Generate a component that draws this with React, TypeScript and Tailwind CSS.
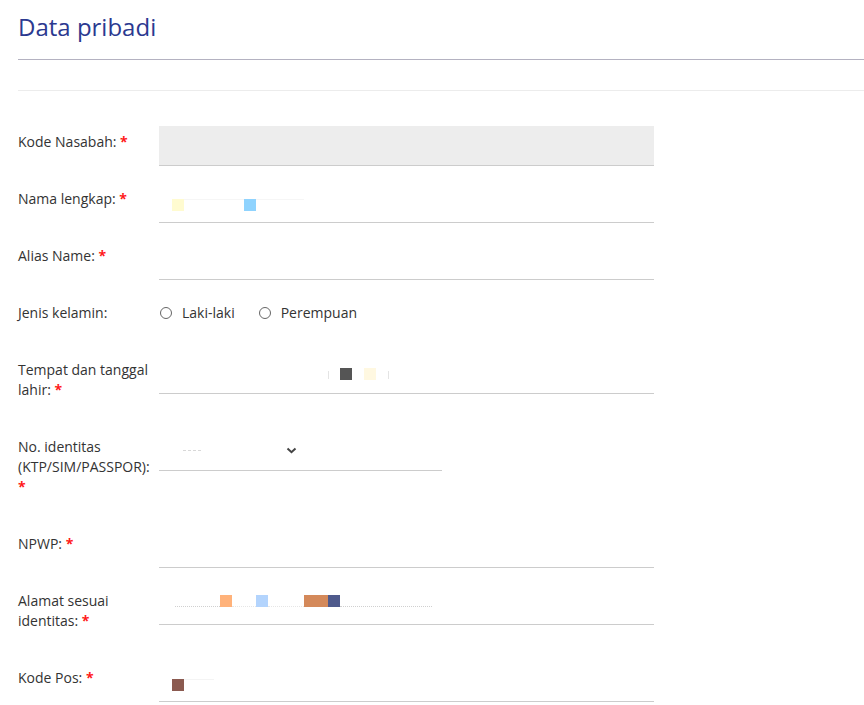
import React from "react";

const Req = () => <span className="text-[#ff1a1a] font-bold"> *</span>;

interface RowProps {
  label: React.ReactNode;
  children: React.ReactNode;
}

const Row = ({ label, children }: RowProps) => (
  <div className="flex mb-[17px]">
    <label className="w-[141px] shrink-0 pr-[6px] pt-[6px] pb-[14px] text-[14px] leading-[20px] text-[#333]">
      {label}
    </label>
    {children}
  </div>
);

const Line = ({ children, className = "" }: { children?: React.ReactNode; className?: string }) => (
  <div className={`h-[40px] w-[495px] border-b border-[#cccccc] ${className}`}>{children}</div>
);

export default function App() {
  return (
    <div className="bg-white min-h-[705px] pl-[18px] font-['Open_Sans',sans-serif]">
      <div className="h-[60px] border-b border-[#b4b2c1] pt-[11px]">
        <h1 className="text-[24px] leading-[32px] text-[#2b3990]">Data pribadi</h1>
      </div>
      <div className="h-[31px] border-b border-[#ececec]" />
      <form className="pt-[35px]">
        <Row label={<>Kode Nasabah:<Req /></>}>
          <Line className="bg-[#ededed]" />
        </Row>

        <Row label={<>Nama lengkap:<Req /></>}>
          <Line className="flex pt-[16px] pl-[13px]">
            <span className="h-[12px] w-[12px] bg-[#fffbd0]" />
            <span className="h-[12px] w-[60px] border-t border-[#f6f6f6]" />
            <span className="h-[12px] w-[12px] bg-[#8fd3fe]" />
            <span className="h-[12px] w-[48px] border-t border-[#f6f6f6]" />
          </Line>
        </Row>

        <Row label={<>Alias Name:<Req /></>}>
          <Line />
        </Row>

        <Row label="Jenis kelamin:">
          <div className="flex h-[40px] items-start pt-[6px] text-[14px] leading-[20px] text-[#333]">
            <label className="flex items-center">
              <span className="ml-[1px] h-[12px] w-[12px] rounded-full border border-[#666]" />
              <span className="ml-[10px]">Laki-laki</span>
            </label>
            <label className="ml-[24px] flex items-center">
              <span className="h-[12px] w-[12px] rounded-full border border-[#666]" />
              <span className="ml-[10px]">Perempuan</span>
            </label>
          </div>
        </Row>

        <Row label={<>Tempat dan tanggal lahir:<Req /></>}>
          <Line className="flex pt-[14px] pl-[169px]">
            <span className="mt-[3px] h-[8px] w-[1px] bg-[#e4e4e4]" />
            <span className="ml-[11px] h-[12px] w-[12px] bg-[#555555]" />
            <span className="ml-[12px] h-[12px] w-[12px] bg-[#fff8e1]" />
            <span className="ml-[12px] mt-[3px] h-[8px] w-[1px] bg-[#e4e4e4]" />
          </Line>
        </Row>

        <Row label={<>No. identitas (KTP/SIM/PASSPOR):<Req /></>}>
          <div className="flex h-[40px] w-[283px] items-center border-b border-[#cccccc] pl-[24px]">
            <span className="h-[1px] w-[18px] border-t border-dashed border-[#d8d8d8]" />
            <svg className="ml-[85px]" width="11" height="7" viewBox="0 0 11 7">
              <path d="M1.5 1.5 L5.5 5.2 L9.5 1.5" fill="none" stroke="#444" strokeWidth="2" />
            </svg>
          </div>
        </Row>

        <Row label={<>NPWP:<Req /></>}>
          <Line />
        </Row>

        <Row label={<>Alamat sesuai identitas:<Req /></>}>
          <Line className="flex items-start pt-[10px] pl-[16px]">
            <span className="mt-[11px] h-[1px] w-[45px] border-t border-dotted border-[#d0d0d0]" />
            <span className="h-[12px] w-[12px] bg-[#ffb27a]" />
            <span className="mt-[11px] h-[1px] w-[24px] border-t border-dotted border-[#e6e6e6]" />
            <span className="h-[12px] w-[12px] bg-[#b3d4fd]" />
            <span className="mt-[11px] h-[1px] w-[36px] border-t border-dotted border-[#e6e6e6]" />
            <span className="h-[12px] w-[24px] bg-[#d4895a]" />
            <span className="h-[12px] w-[12px] bg-[#4f5a8c]" />
            <span className="mt-[11px] h-[1px] w-[92px] border-t border-dotted border-[#d0d0d0]" />
          </Line>
        </Row>

        <Row label={<>Kode Pos:<Req /></>}>
          <Line className="flex pt-[17px] pl-[13px]">
            <span className="h-[12px] w-[12px] bg-[#8b5a50]" />
            <span className="h-[12px] w-[30px] border-t border-[#f4f4f4]" />
          </Line>
        </Row>
      </form>
    </div>
  );
}
